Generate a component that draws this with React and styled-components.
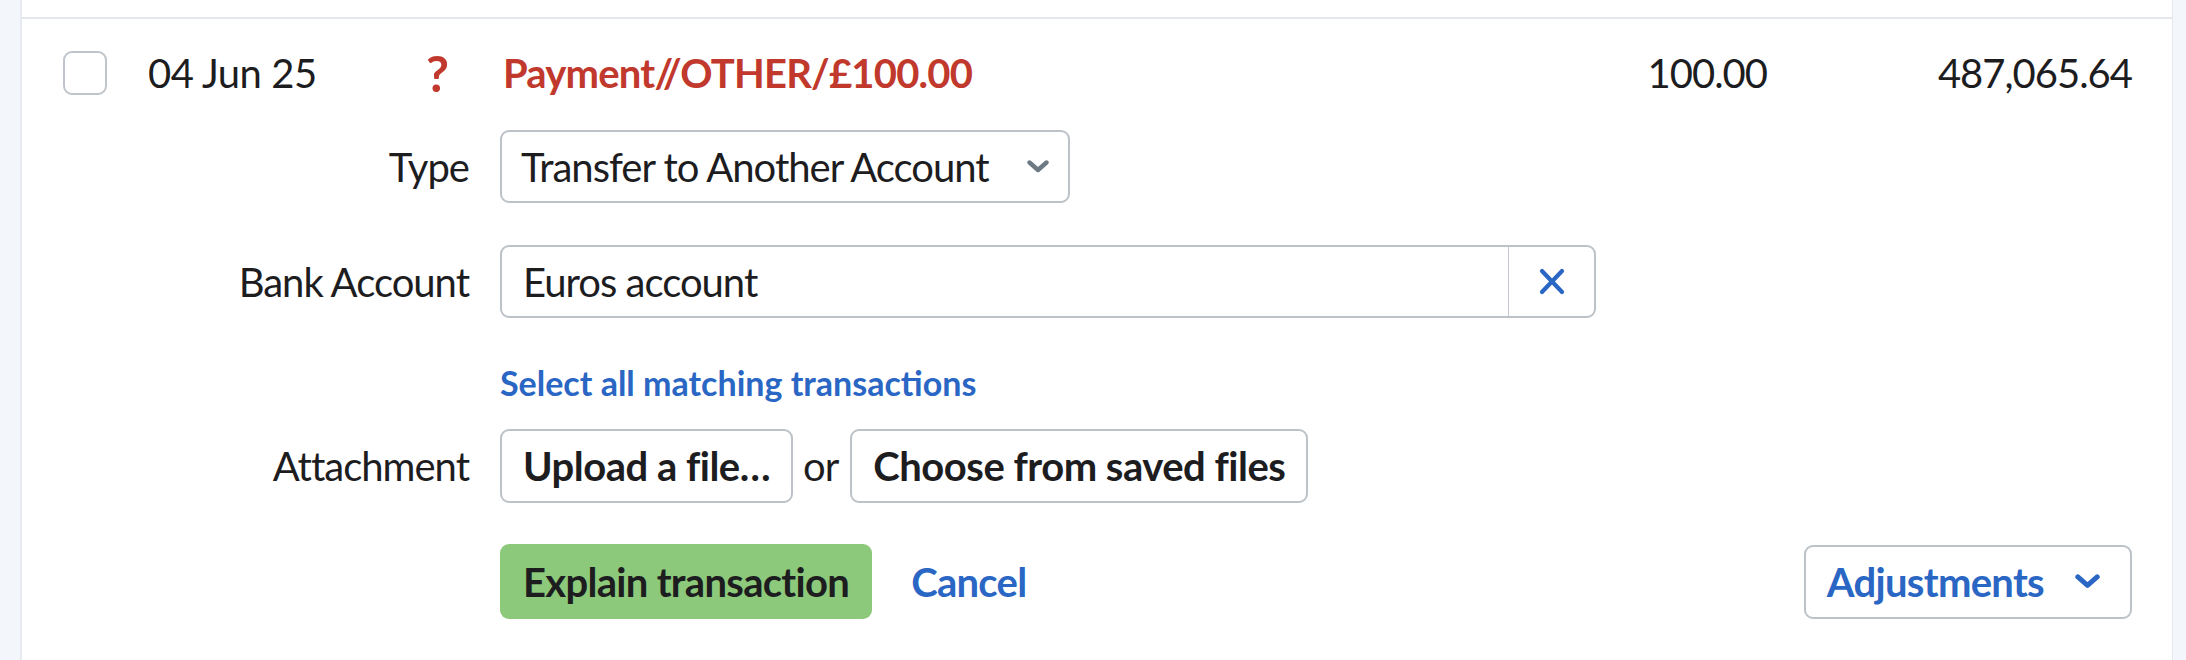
import React from 'react';
import styled, { createGlobalStyle } from 'styled-components';

const GlobalStyle = createGlobalStyle`
  html, body {
    margin: 0;
    padding: 0;
    background: #fff;
  }
  body {
    font-family: Lato, "Liberation Sans", sans-serif;
    color: #1d1d1f;
    -webkit-font-smoothing: antialiased;
  }
  * {
    box-sizing: border-box;
  }
`;

const Page = styled.div`
  display: flex;
  min-height: 660px;
`;

const Strip = styled.div`
  flex: 0 0 ${(p) => p.$width}px;
  background: #f3f6fb;
  border-left: ${(p) => (p.$side === 'right' ? '1px solid #e4e8ee' : 'none')};
  border-right: ${(p) => (p.$side === 'left' ? '2px solid #e7ebf1' : 'none')};
`;

const Panel = styled.div`
  flex: 1;
  min-width: 0;
  padding-top: 17px;
  background: #fff;
`;

const Transaction = styled.div`
  border-top: 2px solid #e4e7ed;
  padding: 30px 40px 41px 41px;
`;

const TopRow = styled.div`
  display: grid;
  grid-template-columns: 85px 278px 77px 1fr 200px 365px;
  align-items: center;
  height: 44px;
`;

const Checkbox = styled.span`
  display: block;
  width: 44px;
  height: 44px;
  border: 2px solid #bfc5cb;
  border-radius: 9px;
  background: #fff;
`;

const Cell = styled.span`
  font-size: 40px;
  line-height: 48px;
  letter-spacing: ${(p) => (p.$tight ? '-1px' : '-0.5px')};
  white-space: nowrap;
  text-align: ${(p) => (p.$right ? 'right' : 'left')};
`;

const Unknown = styled.span`
  font-size: 50px;
  line-height: 48px;
  font-weight: 700;
  color: #c1392d;
`;

const Description = styled.span`
  font-size: 40px;
  line-height: 48px;
  font-weight: 700;
  letter-spacing: -0.8px;
  color: #c1392d;
  white-space: nowrap;
`;

const Field = styled.div`
  display: flex;
  align-items: center;
  margin-top: ${(p) => p.$mt}px;
  min-height: ${(p) => p.$h || 0}px;
`;

const Label = styled.div`
  flex: 0 0 437px;
  padding-right: 31px;
  text-align: right;
  font-size: 40px;
  line-height: 48px;
  letter-spacing: -1px;
  white-space: nowrap;
`;

const Control = styled.div`
  flex: 1;
  display: flex;
  align-items: center;
`;

const Select = styled.div`
  width: 570px;
  height: 73px;
  border: 2px solid #bcc2c8;
  border-radius: 9px;
  padding: 0 19px 0 19px;
  display: flex;
  align-items: center;
  justify-content: space-between;
  font-size: 40px;
  letter-spacing: -1px;
`;

const InputGroup = styled.div`
  width: 1096px;
  height: 73px;
  border: 2px solid #bcc2c8;
  border-radius: 9px;
  display: flex;
  align-items: stretch;
`;

const InputText = styled.div`
  flex: 1;
  display: flex;
  align-items: center;
  padding-left: 21px;
  font-size: 40px;
  letter-spacing: -1px;
`;

const ClearButton = styled.div`
  flex: 0 0 86px;
  border-left: 1px solid #c3c9cf;
  display: flex;
  align-items: center;
  justify-content: center;
`;

const TextLink = styled.span`
  font-size: ${(p) => p.$size || 40}px;
  line-height: 46px;
  font-weight: 700;
  letter-spacing: ${(p) => (p.$size ? '0' : '-0.7px')};
  color: #2a66c3;
  white-space: nowrap;
  margin-left: ${(p) => p.$ml || 0}px;
`;

const Button = styled.div`
  height: ${(p) => (p.$primary ? 75 : 74)}px;
  padding: 0 ${(p) => (p.$primary ? 23 : 21)}px;
  display: flex;
  align-items: center;
  gap: 31px;
  border: ${(p) => (p.$primary ? 'none' : '2px solid #bcc2c8')};
  border-radius: 9px;
  background: ${(p) => (p.$primary ? '#8cc97a' : '#fff')};
  color: ${(p) => (p.$blue ? '#2a66c3' : '#1d1d1f')};
  font-size: 40px;
  font-weight: 700;
  letter-spacing: ${(p) => (p.$primary || p.$blue ? '-0.7px' : '-0.5px')};
  white-space: nowrap;
  margin-left: ${(p) => (p.$push ? 'auto' : '0')};
  padding-right: ${(p) => (p.$push ? '30px' : undefined)};
`;

const Or = styled.span`
  font-size: 40px;
  letter-spacing: -1px;
  margin: 0 12px 0 10px;
`;

const Chevron = ({ color, w = 22, h = 13 }) => (
  <svg width={w} height={h} viewBox="0 0 22 13" fill="none">
    <path d="M2.5 2.5 L11 10 L19.5 2.5" stroke={color} strokeWidth="4.4" strokeLinecap="round" strokeLinejoin="round" />
  </svg>
);

const Cross = () => (
  <svg width="26" height="27" viewBox="0 0 26 27" fill="none">
    <path d="M3 3 L23 24 M23 3 L3 24" stroke="#2a66c3" strokeWidth="4.2" strokeLinecap="round" />
  </svg>
);

export default function App() {
  return (
    <>
      <GlobalStyle />
      <Page>
        <Strip $width={22} $side="left" />
        <Panel>
          <Transaction>
            <TopRow>
              <Checkbox />
              <Cell>04 Jun 25</Cell>
              <Unknown>?</Unknown>
              <Description>Payment//OTHER/£100.00</Description>
              <Cell $right $tight>100.00</Cell>
              <Cell $right $tight>487,065.64</Cell>
            </TopRow>

            <Field $mt={37}>
              <Label>Type</Label>
              <Control>
                <Select>
                  <span>Transfer to Another Account</span>
                  <Chevron color="#6e7a83" />
                </Select>
              </Control>
            </Field>

            <Field $mt={42}>
              <Label>Bank Account</Label>
              <Control>
                <InputGroup>
                  <InputText>Euros account</InputText>
                  <ClearButton>
                    <Cross />
                  </ClearButton>
                </InputGroup>
              </Control>
            </Field>

            <Field $mt={42} $h={46}>
              <Label />
              <Control>
                <TextLink $size={34}>Select all matching transactions</TextLink>
              </Control>
            </Field>

            <Field $mt={23}>
              <Label>Attachment</Label>
              <Control>
                <Button>Upload a file…</Button>
                <Or>or</Or>
                <Button>Choose from saved files</Button>
              </Control>
            </Field>

            <Field $mt={41}>
              <Label />
              <Control>
                <Button $primary>Explain transaction</Button>
                <TextLink $ml={39}>Cancel</TextLink>
                <Button $blue $push>
                  Adjustments
                  <Chevron color="#2a66c3" w={25} h={15} />
                </Button>
              </Control>
            </Field>
          </Transaction>
        </Panel>
        <Strip $width={14} $side="right" />
      </Page>
    </>
  );
}
